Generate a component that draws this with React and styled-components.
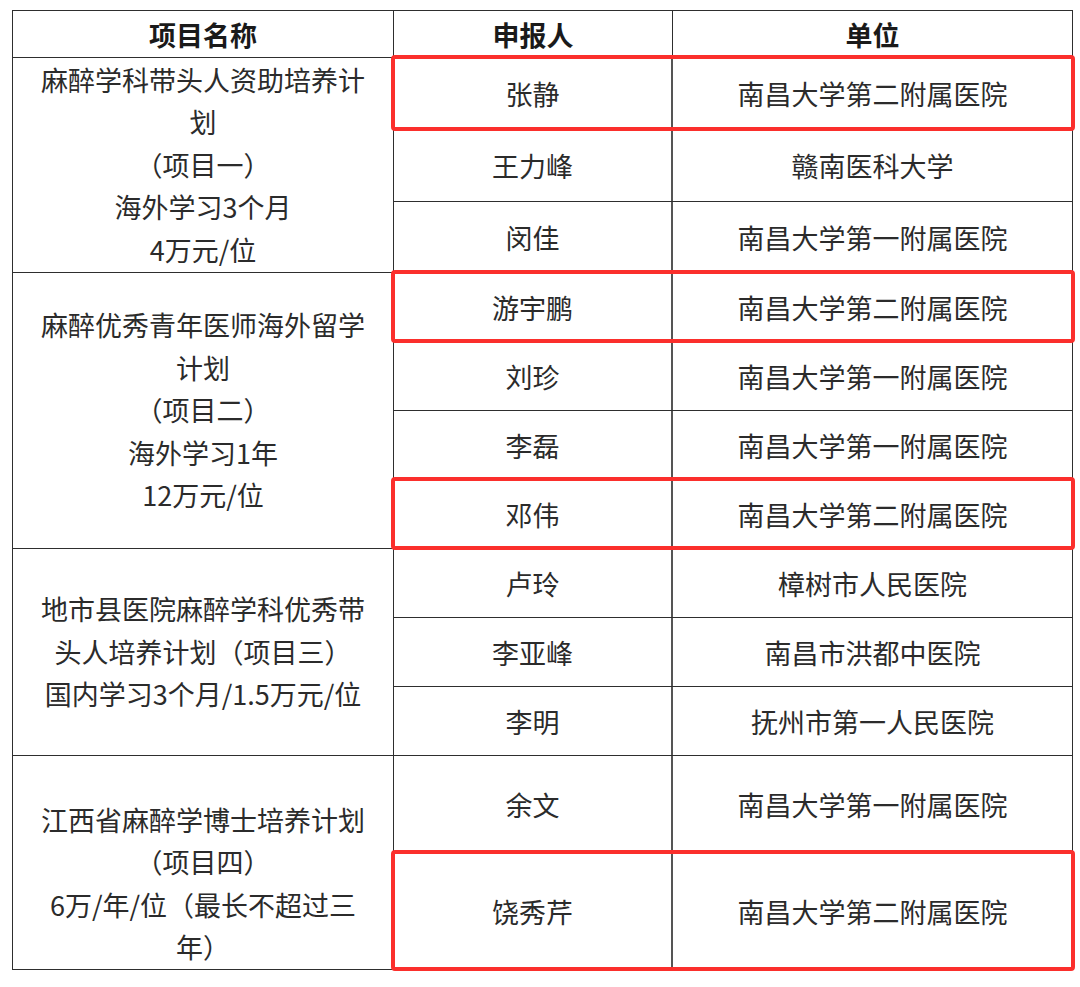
import React from "react";
import styled, { createGlobalStyle } from "styled-components";

const GlobalStyle = createGlobalStyle`
  html, body {
    margin: 0;
    padding: 0;
    background: #ffffff;
  }
  body {
    font-family: "Noto Sans CJK SC", "Noto Sans", sans-serif;
    color: #2b2b2b;
  }
`;

const COLORS = {
  line: "#2e2e2e",
  text: "#2b2b2b",
  head: "#1a1a1a",
  red: "#fb2f2c",
};

const groups = [
  {
    lines: ["麻醉学科带头人资助培养计", "划", "（项目一）", "海外学习3个月", "4万元/位"],
    rows: [
      { name: "张静", unit: "南昌大学第二附属医院", h: 72, mark: true },
      { name: "王力峰", unit: "赣南医科大学", h: 72 },
      { name: "闵佳", unit: "南昌大学第一附属医院", h: 71 },
    ],
  },
  {
    lines: ["麻醉优秀青年医师海外留学", "计划", "（项目二）", "海外学习1年", "12万元/位"],
    rows: [
      { name: "游宇鹏", unit: "南昌大学第二附属医院", h: 69, mark: true },
      { name: "刘珍", unit: "南昌大学第一附属医院", h: 69 },
      { name: "李磊", unit: "南昌大学第一附属医院", h: 69 },
      { name: "邓伟", unit: "南昌大学第二附属医院", h: 69, mark: true },
    ],
  },
  {
    lines: ["地市县医院麻醉学科优秀带", "头人培养计划（项目三）", "国内学习3个月/1.5万元/位"],
    rows: [
      { name: "卢玲", unit: "樟树市人民医院", h: 69 },
      { name: "李亚峰", unit: "南昌市洪都中医院", h: 69 },
      { name: "李明", unit: "抚州市第一人民医院", h: 69 },
    ],
  },
  {
    lines: ["", "江西省麻醉学博士培养计划", "（项目四）", "6万/年/位（最长不超过三", "年）"],
    rows: [
      { name: "余文", unit: "南昌大学第一附属医院", h: 97 },
      { name: "饶秀芹", unit: "南昌大学第二附属医院", h: 117, mark: true },
    ],
  },
];

export default function App() {
  return (
    <>
      <GlobalStyle />
      <Page>
        <Table>
          <HeaderRow>
            <HeadCell>项目名称</HeadCell>
            <HeadCell>申报人</HeadCell>
            <HeadCell $last>单位</HeadCell>
          </HeaderRow>
          {groups.map((g, gi) => (
            <Group key={gi}>
              <ProjectCell>
                {g.lines.map((l, li) => (
                  <Line key={li}>{l || "\u00a0"}</Line>
                ))}
              </ProjectCell>
              <Entries>
                {g.rows.map((r) => (
                  <Entry key={r.name} $h={r.h} $mark={r.mark}>
                    <NameCell>{r.name}</NameCell>
                    <UnitCell>{r.unit}</UnitCell>
                  </Entry>
                ))}
              </Entries>
            </Group>
          ))}
        </Table>
      </Page>
    </>
  );
}

const Page = styled.div`
  padding: 10px 0 17px 12px;
`;

const Table = styled.div`
  width: 1061px;
  box-sizing: border-box;
  border-top: 1px solid ${COLORS.line};
  border-left: 1px solid ${COLORS.line};
  border-right: 1px solid ${COLORS.line};
  display: flex;
  flex-direction: column;
`;

const HeaderRow = styled.div`
  display: grid;
  grid-template-columns: 381px 279px 1fr;
  height: 47px;
  box-sizing: border-box;
  border-bottom: 1px solid ${COLORS.line};
`;

const HeadCell = styled.div`
  display: flex;
  align-items: center;
  justify-content: center;
  font-size: 27px;
  font-weight: 700;
  color: ${COLORS.head};
  border-right: ${(p) => (p.$last ? "none" : `1px solid ${COLORS.line}`)};
`;

const Group = styled.div`
  display: grid;
  grid-template-columns: 381px 1fr;
`;

const ProjectCell = styled.div`
  display: flex;
  flex-direction: column;
  align-items: center;
  justify-content: center;
  padding: 0 16px;
  box-sizing: border-box;
  border-right: 1px solid ${COLORS.line};
  border-bottom: 1px solid ${COLORS.line};
  font-size: 27px;
  line-height: 42.5px;
  color: ${COLORS.text};
  text-align: center;
`;

const Line = styled.div`
  white-space: nowrap;
`;

const Entries = styled.div`
  display: flex;
  flex-direction: column;
`;

const Entry = styled.div`
  position: relative;
  display: grid;
  grid-template-columns: 279px 1fr;
  height: ${(p) => p.$h}px;
  box-sizing: border-box;
  border-bottom: 1px solid ${COLORS.line};

  &::after {
    content: "";
    display: ${(p) => (p.$mark ? "block" : "none")};
    position: absolute;
    top: -3px;
    bottom: -2px;
    left: -3px;
    right: -3px;
    border: 4px solid ${COLORS.red};
    border-radius: 4px;
    pointer-events: none;
    z-index: 2;
  }
`;

const NameCell = styled.div`
  display: flex;
  align-items: center;
  justify-content: center;
  font-size: 27px;
  color: ${COLORS.text};
  border-right: 2px solid #555555;
`;

const UnitCell = styled.div`
  display: flex;
  align-items: center;
  justify-content: center;
  font-size: 27px;
  color: ${COLORS.text};
`;
